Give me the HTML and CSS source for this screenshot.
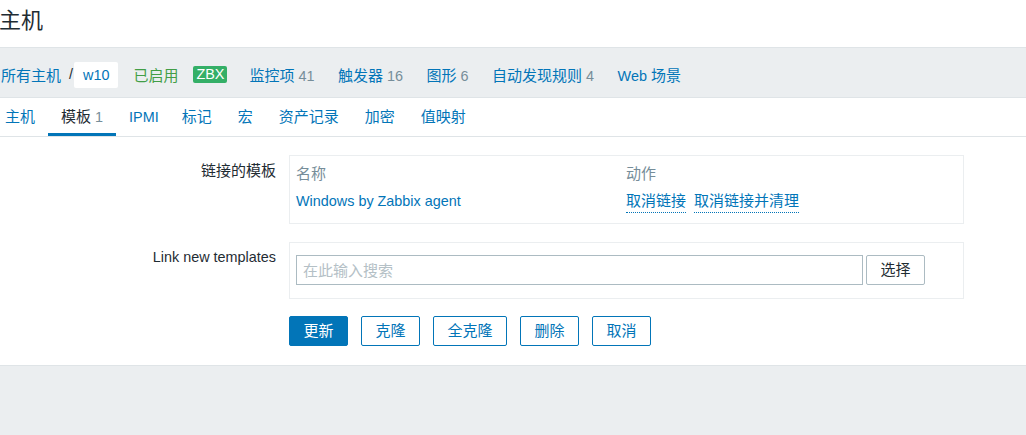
FILE: index.html
```html
<!DOCTYPE html>
<html lang="zh-CN">
<head>
<meta charset="utf-8">
<title>主机</title>
<link rel="stylesheet" href="styles.css">
</head>
<body>
<header class="page-header">
  <h1 class="page-title">主机</h1>
</header>
<nav class="host-nav">
  <a class="crumb zh">所有主机</a>
  <span class="crumb-sep">/</span>
  <span class="crumb-current">w10</span>
  <span class="status-enabled zh">已启用</span>
  <span class="badge-zbx">ZBX</span>
  <a class="nav-link nav-first"><span class="zh">监控项</span> <span class="count">41</span></a>
  <a class="nav-link"><span class="zh">触发器</span> <span class="count">16</span></a>
  <a class="nav-link"><span class="zh">图形</span> <span class="count">6</span></a>
  <a class="nav-link"><span class="zh">自动发现规则</span> <span class="count">4</span></a>
  <a class="nav-link">Web <span class="zh">场景</span></a>
</nav>
<ul class="tabs">
  <li class="tab"><span class="zh">主机</span></li>
  <li class="tab tab-active"><span class="zh">模板</span> <span class="count">1</span></li>
  <li class="tab tab-ipmi">IPMI</li>
  <li class="tab"><span class="zh">标记</span></li>
  <li class="tab"><span class="zh">宏</span></li>
  <li class="tab"><span class="zh">资产记录</span></li>
  <li class="tab"><span class="zh">加密</span></li>
  <li class="tab"><span class="zh">值映射</span></li>
</ul>
<main class="content">
  <form class="form">
    <div class="form-row row-linked">
      <label class="form-label"><span class="zh">链接的模板</span></label>
      <div class="box linked-box">
        <table class="linked-table">
          <thead>
            <tr><th class="col-name"><span class="zh">名称</span></th><th><span class="zh">动作</span></th></tr>
          </thead>
          <tbody>
            <tr>
              <td><a class="link">Windows by Zabbix agent</a></td>
              <td><a class="link-action zh">取消链接</a><a class="link-action zh">取消链接并清理</a></td>
            </tr>
          </tbody>
        </table>
      </div>
    </div>
    <div class="form-row row-new">
      <label class="form-label label-new">Link new templates</label>
      <div class="box new-box">
        <input class="search-input" type="text" placeholder="在此输入搜索">
        <button class="btn btn-grey" type="button">选择</button>
      </div>
    </div>
    <div class="form-row row-buttons">
      <span></span>
      <div class="buttons">
        <button class="btn btn-primary" type="button">更新</button>
        <button class="btn btn-alt" type="button">克隆</button>
        <button class="btn btn-alt" type="button">全克隆</button>
        <button class="btn btn-alt" type="button">删除</button>
        <button class="btn btn-alt" type="button">取消</button>
      </div>
    </div>
  </form>
</main>
</body>
</html>
```
FILE: styles.css
```css
* { box-sizing: border-box; }

html, body {
  margin: 0;
  padding: 0;
}

body {
  font-family: "Liberation Sans", "Noto Sans CJK SC", sans-serif;
  font-size: 14.4px;
  color: #1f2c33;
  background: #ebeef0;
}

a { text-decoration: none; cursor: pointer; }

.zh { font-size: 15px; }

.page-header {
  background: #fff;
  height: 47px;
}

.page-title {
  margin: 0 0 0 -1px;
  font-size: 22px;
  font-weight: normal;
  line-height: 41px;
  color: #1f2c33;
}

.host-nav {
  height: 51px;
  display: flex;
  align-items: center;
  padding: 13px 0 10px 1px;
  background: #ebeef0;
  border-top: 1px solid #dfe4e7;
  border-bottom: 1px solid #dfe4e7;
}

.crumb { color: #0275b8; }

.crumb-sep {
  color: #1f2c33;
  margin: 0 1px 0 8px;
}

.crumb-current {
  background: #fff;
  color: #0275b8;
  height: 26px;
  line-height: 26px;
  padding: 0 9px;
  border-radius: 2px;
  margin-top: 2px;
}

.status-enabled {
  color: #429e47;
  margin-left: 15px;
}

.badge-zbx {
  margin-left: 15px;
  background: #34af67;
  color: #fff;
  height: 17px;
  line-height: 17px;
  padding: 0 3px;
  border-radius: 2px;
}

.nav-link {
  color: #0275b8;
  margin-left: 23.5px;
}

.nav-first { margin-left: 22px; }

.count { color: #768d99; }

.tabs {
  list-style: none;
  margin: 0;
  padding: 0;
  display: flex;
  height: 39px;
  background: #fff;
  border-bottom: 1px solid #dfe4e7;
}

.tab {
  height: 38px;
  line-height: 38px;
  padding: 0 13px;
  color: #0275b8;
  border-bottom: 3px solid transparent;
}

.tab:first-child { margin-left: -8px; }

.tab-ipmi { padding-right: 10px; }

.tab-active {
  color: #1f2c33;
  border-bottom-color: #0275b8;
  line-height: 35px;
  padding-top: 1px;
}

.content {
  background: #fff;
  padding: 18px 0 19px;
  border-bottom: 1px solid #dfe4e7;
}

.form-row {
  display: grid;
  grid-template-columns: 276px 675px;
  column-gap: 13px;
  align-items: start;
}

.row-linked { margin-bottom: 18px; }
.row-new { margin-bottom: 17px; }

.form-label {
  text-align: right;
  line-height: 17px;
  padding-top: 7px;
}

.box {
  border: 1px solid #ebeef0;
}

.linked-box {
  height: 69px;
  padding: 5px 6px 0;
}

.linked-table {
  border-collapse: collapse;
}

.linked-table th {
  text-align: left;
  font-weight: normal;
  color: #768d99;
  height: 25px;
  line-height: 25px;
  padding: 0;
}

.linked-table .col-name { width: 330px; }

.linked-table td {
  height: 27px;
  line-height: 25px;
  padding: 1px 0 0;
}

.link { color: #0275b8; }

.link-action {
  color: #0275b8;
  border-bottom: 1px dotted #0275b8;
  padding-bottom: 3px;
  margin-right: 8px;
}

.new-box {
  height: 57px;
  display: flex;
  align-items: center;
  padding: 0 6px 1px;
}

.search-input {
  width: 567px;
  height: 30px;
  border: 1px solid #acbbc2;
  padding: 0 6px;
  font-family: inherit;
  font-size: 15px;
  color: #1f2c33;
  background: #fff;
  outline: none;
}

.search-input::placeholder { color: #b4c0c6; }

.btn {
  height: 30px;
  line-height: 28px;
  padding: 0 13.5px;
  font-family: inherit;
  font-size: 15px;
  border-radius: 2px;
  cursor: pointer;
}

.btn-grey {
  margin-left: 3px;
  background: #fff;
  border: 1px solid #acbbc2;
  color: #1f2c33;
}

.buttons {
  display: flex;
  gap: 13px;
}

.btn-primary {
  background: #0275b8;
  border: 1px solid #0275b8;
  color: #fff;
}

.btn-alt {
  background: #fff;
  border: 1px solid #0275b8;
  color: #0275b8;
}
```
